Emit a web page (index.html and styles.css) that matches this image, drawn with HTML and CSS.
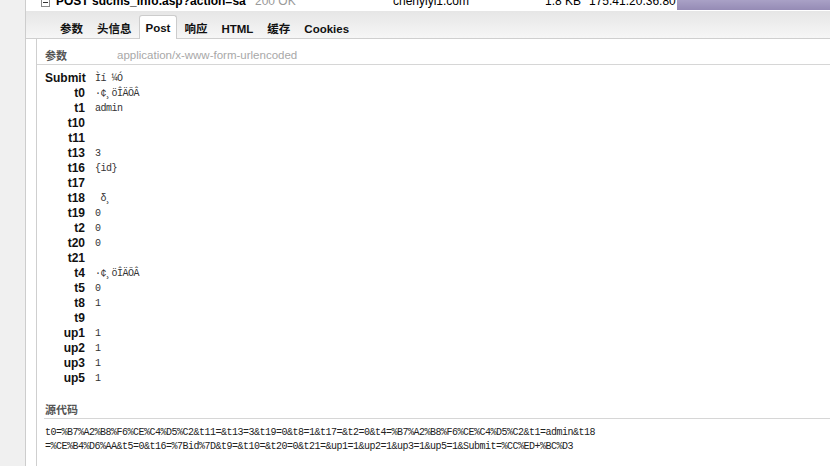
FILE: index.html
```html
<!DOCTYPE html>
<html>
<head>
<meta charset="utf-8">
<link rel="stylesheet" href="styles.css">
</head>
<body>
<div class="gutter"></div>
<div class="main">
  <div class="reqrow">
    <div class="reqline">
      <svg class="toggle" width="9" height="9" viewBox="0 0 9 9"><rect x="0.5" y="0.5" width="8" height="8" fill="#fff" stroke="#8a8a8a"/><path d="M2 4.5h5" stroke="#333" stroke-width="1"/></svg>
      <span class="url">POST sdcms_info.asp?action=sa'</span>
      <span class="status">200 OK</span>
      <span class="domain">chenyiyi1.com</span>
      <span class="size">1.8 KB</span>
      <span class="ip">175.41.20.36:80</span>
    </div>
    <div class="timebar"></div>
  </div>
  <div class="tabs">
    <span class="tab">参数</span>
    <span class="tab">头信息</span>
    <span class="tab active">Post</span>
    <span class="tab">响应</span>
    <span class="tab">HTML</span>
    <span class="tab">缓存</span>
    <span class="tab">Cookies</span>
  </div>
  <div class="panel">
    <div class="phead">
      <span class="phead-title">参数</span>
      <span class="phead-type">application/x-www-form-urlencoded</span>
    </div>
    <div class="params">
      <span class="k">Submit</span><span class="v">Ìí ¼Ó</span>
      <span class="k">t0</span><span class="v">·¢¸öÎÄÕÂ</span>
      <span class="k">t1</span><span class="v">admin</span>
      <span class="k">t10</span><span class="v"></span>
      <span class="k">t11</span><span class="v"></span>
      <span class="k">t13</span><span class="v">3</span>
      <span class="k">t16</span><span class="v">{id}</span>
      <span class="k">t17</span><span class="v"></span>
      <span class="k">t18</span><span class="v"> δ¸</span>
      <span class="k">t19</span><span class="v">0</span>
      <span class="k">t2</span><span class="v">0</span>
      <span class="k">t20</span><span class="v">0</span>
      <span class="k">t21</span><span class="v"></span>
      <span class="k">t4</span><span class="v">·¢¸öÎÄÕÂ</span>
      <span class="k">t5</span><span class="v">0</span>
      <span class="k">t8</span><span class="v">1</span>
      <span class="k">t9</span><span class="v"></span>
      <span class="k">up1</span><span class="v">1</span>
      <span class="k">up2</span><span class="v">1</span>
      <span class="k">up3</span><span class="v">1</span>
      <span class="k">up5</span><span class="v">1</span>
    </div>
    <div class="source">
      <div class="source-title">源代码</div>
      <div class="source-body">
        <div>t0=%B7%A2%B8%F6%CE%C4%D5%C2&amp;t11=&amp;t13=3&amp;t19=0&amp;t8=1&amp;t17=&amp;t2=0&amp;t4=%B7%A2%B8%F6%CE%C4%D5%C2&amp;t1=admin&amp;t18</div>
        <div>=%CE%B4%D6%AA&amp;t5=0&amp;t16=%7Bid%7D&amp;t9=&amp;t10=&amp;t20=0&amp;t21=&amp;up1=1&amp;up2=1&amp;up3=1&amp;up5=1&amp;Submit=%CC%ED+%BC%D3</div>
      </div>
    </div>
  </div>
</div>
</body>
</html>
```

FILE: styles.css
```css
html, body {
  margin: 0;
  padding: 0;
  height: 100%;
  background: #fff;
}
body {
  display: flex;
  font-family: "Liberation Sans", "Noto Sans CJK SC", sans-serif;
  overflow: hidden;
}
.gutter {
  width: 25px;
  flex: none;
  background: #f0f0f0;
  border-right: 1px solid #cdcdcd;
}
.main {
  flex: 1;
  display: flex;
  flex-direction: column;
  min-width: 0;
}
.reqrow {
  height: 11px;
  overflow: hidden;
  display: flex;
  align-items: flex-start;
}
.reqline {
  display: flex;
  align-items: center;
  margin-top: -6px;
  height: 14px;
  font-size: 12px;
  line-height: 14px;
  white-space: nowrap;
  color: #000;
}
.toggle {
  margin-left: 15px;
  margin-right: 6px;
  margin-top: 2px;
}
.url {
  font-weight: bold;
  width: 199px;
}
.status {
  color: #9a9a9a;
  width: 138px;
}
.domain {
  width: 152px;
}
.size {
  width: 44px;
}
.ip {
  width: 88px;
}
.timebar {
  margin-left: auto;
  width: 155px;
  height: 10px;
  background: linear-gradient(#a9a1c6, #958bb5);
}
.tabs {
  display: flex;
  align-items: flex-end;
  padding-left: 27px;
  background: linear-gradient(#e6e6e6, #f6f6f6);
  border-bottom: 1px solid #cfcfcf;
  box-sizing: border-box;
  height: 28px;
}
.tab {
  font-family: "Liberation Sans", "Noto Sans CJK SC", sans-serif;
  font-weight: bold;
  font-size: 11.5px;
  color: #111;
  padding: 2px 6px 0;
  height: 20px;
  line-height: 20px;
  border: 1px solid transparent;
  border-bottom: none;
  margin-bottom: -1px;
}
.tab.active {
  background: #fff;
  border-color: #cccccc;
  border-radius: 3px 3px 0 0;
  height: 21px;
}
.panel {
  flex: 1;
  margin-left: 10px;
  border-left: 1px solid #cfcfcf;
  padding-top: 8px;
}
.phead {
  display: flex;
  border-bottom: 1px solid #d6d6d6;
  padding-left: 8px;
  height: 17px;
  line-height: 16px;
  font-size: 11px;
}
.phead-title {
  width: 72px;
  font-weight: bold;
  color: #555;
  font-family: "Noto Sans CJK SC", sans-serif;
  font-size: 11px;
}
.phead-type {
  color: #a8a8a8;
  font-size: 11.5px;
}
.params {
  display: grid;
  grid-template-columns: 40px 1fr;
  column-gap: 10px;
  grid-auto-rows: 15px;
  padding-left: 8px;
  margin-top: 6px;
}
.k {
  text-align: right;
  font-weight: bold;
  font-size: 12px;
  line-height: 15px;
  color: #111;
  white-space: nowrap;
}
.v {
  font-family: "Liberation Mono", monospace;
  font-size: 10px;
  letter-spacing: -0.5px;
  line-height: 15px;
  color: #333;
  white-space: pre;
}
.source {
  margin-top: 15px;
  margin-left: 7px;
}
.source-title {
  font-family: "Noto Sans CJK SC", sans-serif;
  font-weight: bold;
  font-size: 11px;
  color: #555;
  line-height: 16px;
  height: 17px;
  padding-left: 1px;
  border-bottom: 1px solid #d6d6d6;
}
.source-body {
  padding-top: 7px;
  padding-left: 1px;
  font-family: "Liberation Mono", monospace;
  font-size: 10px;
  letter-spacing: -0.5px;
  line-height: 14px;
  color: #222;
  white-space: nowrap;
}
```
